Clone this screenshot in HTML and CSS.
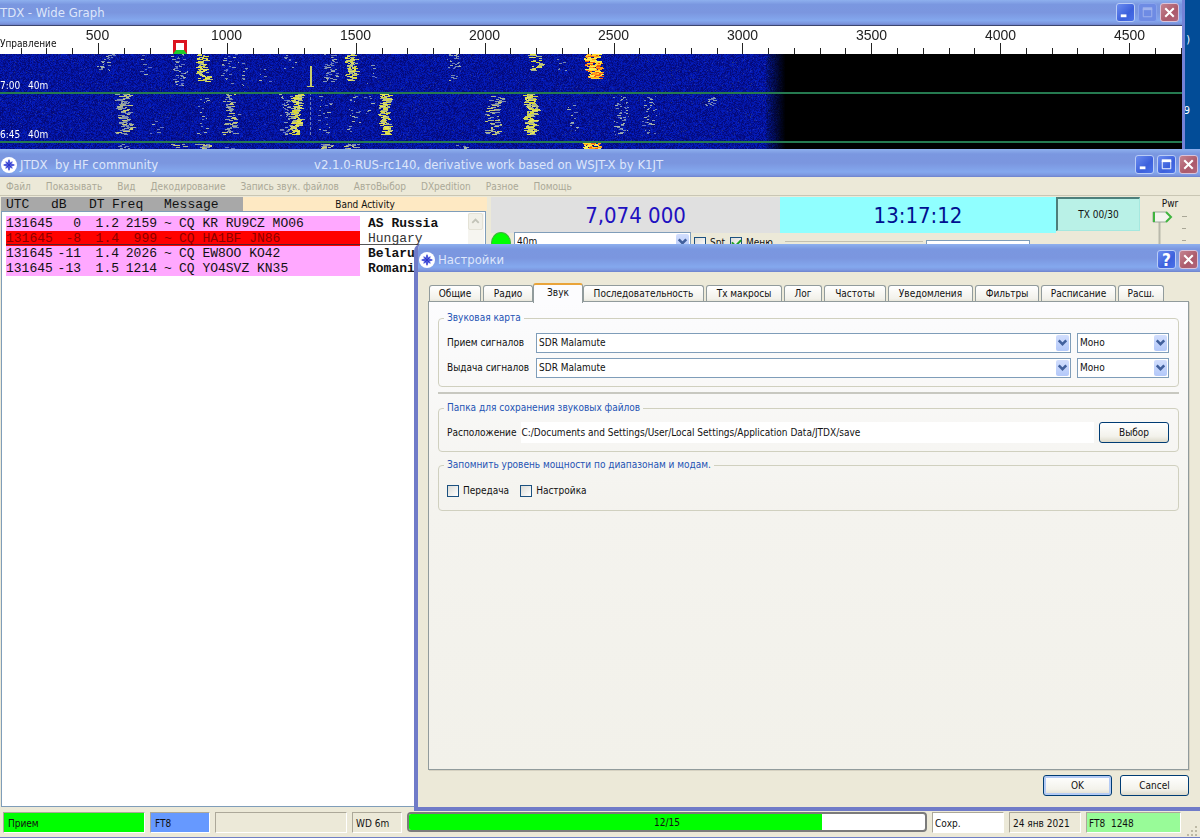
FILE: index.html
```html
<!DOCTYPE html>
<html lang="ru">
<head>
<meta charset="utf-8">
<title>JTDX</title>
<link rel="stylesheet" href="styles.css">
</head>
<body>
<svg class="defs" aria-hidden="true">
  <symbol id="logo" viewBox="0 0 16 16"><circle cx="8" cy="8" r="8" fill="#fff"/><path d="M8 1.500l1.200 3.400 2.600-.700-.700 2.600L14.500 8l-3.400 1.200.700 2.600-2.600-.700L8 14.500l-1.200-3.400-2.600.700.700-2.600L1.500 8l3.400-1.200-.700-2.600 2.600.700z" fill="#6d78e4"/><path d="M8 3v10M3 8h10M5.500 5.500l5 5M10.500 5.500l-5 5" stroke="#2c34cc" stroke-width="1"/></symbol>
  <symbol id="min" viewBox="0 0 18 18"><path d="M4 12.500h6" stroke="#fff" stroke-width="3"/></symbol>
  <symbol id="max" viewBox="0 0 18 18"><path d="M4.500 5v8.500h9V5" fill="none" stroke="#fff"/><path d="M4 5h10" stroke="#fff" stroke-width="3"/></symbol>
  <symbol id="close" viewBox="0 0 18 18"><path d="M4.500 4.500l9 9M13.500 4.500l-9 9" stroke="#fff" stroke-width="2.200"/></symbol>
  <symbol id="chev" viewBox="0 0 12 14"><path d="M2.500 5L6 8.500 9.500 5" fill="none" stroke="#41609c" stroke-width="2.400"/></symbol>
</svg>
<main class="desktop">
  <span class="desk-text desk-a">)</span>
  <span class="desk-text desk-b">9</span>

  <section class="window graph" aria-label="Wide Graph">
    <header class="titlebar">
      <h2 class="title">TDX - Wide Graph</h2>
      <div class="winbtns">
        <button class="wb" aria-label="Свернуть"><svg><use href="#min"/></svg></button>
        <button class="wb dim" aria-label="Развернуть"><svg><use href="#max"/></svg></button>
        <button class="wb red" aria-label="Закрыть"><svg><use href="#close"/></svg></button>
      </div>
    </header>
    <div class="ruler">
      <canvas id="ticks"></canvas>
      <div class="freqs"><span>500</span><span>1000</span><span>1500</span><span>2000</span><span>2500</span><span>3000</span><span>3500</span><span>4000</span><span>4500</span></div>
      <span class="control">Управление</span>
      <span class="marker"></span>
    </div>
    <div class="fall">
      <canvas id="fall"></canvas>
      <div class="stamp s1"><span>7:00</span><span>40m</span></div>
      <div class="stamp s2"><span>6:45</span><span>40m</span></div>
    </div>
  </section>

  <section class="window app" aria-label="JTDX">
    <header class="titlebar">
      <svg class="logo"><use href="#logo"/></svg>
      <h1 class="title name">JTDX&nbsp; by HF community</h1>
      <span class="title grow">v2.1.0-RUS-rc140, derivative work based on WSJT-X by K1JT</span>
      <div class="winbtns">
        <button class="wb" aria-label="Свернуть"><svg><use href="#min"/></svg></button>
        <button class="wb" aria-label="Развернуть"><svg><use href="#max"/></svg></button>
        <button class="wb red" aria-label="Закрыть"><svg><use href="#close"/></svg></button>
      </div>
    </header>
    <nav class="menu"><span>Файл</span><span>Показывать</span><span>Вид</span><span>Декодирование</span><span>Запись звук. файлов</span><span>АвтоВыбор</span><span>DXpedition</span><span>Разное</span><span>Помощь</span></nav>
    <div class="work">
      <div class="left">
        <div class="bandhead">
          <div class="cols"><span class="h-utc">UTC</span><span class="h-db">dB</span><span class="h-dt">DT</span><span class="h-freq">Freq</span><span>Message</span></div>
          <div class="band">Band Activity</div>
        </div>
        <div class="list">
          <table class="decodes">
            <colgroup><col class="c-utc"><col class="c-db"><col class="c-num"><col class="c-num"><col class="c-sign"><col class="c-msg"><col class="c-land"></colgroup>
            <tbody>
            <tr><td>131645</td><td>0</td><td>1.2</td><td>2159</td><td>~</td><td>CQ KR RU9CZ MO06</td><td>AS Russia</td></tr>
            <tr class="alert"><td>131645</td><td>-8</td><td>1.4</td><td>999</td><td>~</td><td>CQ HA1BF JN86</td><td>Hungary</td></tr>
            <tr><td>131645</td><td>-11</td><td>1.4</td><td>2026</td><td>~</td><td>CQ EW8OO KO42</td><td>Belarus</td></tr>
            <tr><td>131645</td><td>-13</td><td>1.5</td><td>1214</td><td>~</td><td>CQ YO4SVZ KN35</td><td>Romania</td></tr>
            </tbody>
          </table>
          <div class="scroll"><button class="up" aria-label="Вверх"><svg viewBox="0 0 14 16"><path d="M3.500 9.500L7 6l3.500 3.500" fill="none" stroke="#c2c3b8" stroke-width="2"/></svg></button></div>
        </div>
      </div>
      <div class="right">
        <div class="readouts">
          <div class="dial">7,074 000</div>
          <div class="clock">13:17:12</div>
          <button class="tx">TX 00/30</button>
        </div>
        <div class="controls">
          <span class="led"></span>
          <span class="combo bandsel"><select aria-label="Диапазон"><option>40m</option></select><span class="arrow"><svg><use href="#chev"/></svg></span></span>
          <label class="check"><input type="checkbox">Spt</label>
          <label class="check"><input type="checkbox" checked>Меню</label>
          <span class="edge"></span>
          <input class="call" aria-label="DX Call">
        </div>
        <label class="pwr">Pwr
          <svg viewBox="0 0 60 40"><path d="M19.500 13v27" stroke="#b9b9ab" stroke-width="2"/><path d="M42 7.500h5M42 19.500h4M42 31.500h4" stroke="#a9a797"/><path d="M13 3h13l5 5-5 5H13z" fill="#f4f4ee" stroke="#9aa89a"/><path d="M14 3v10M26 3l5 5-5 5" fill="none" stroke="#3fb53f" stroke-width="2"/></svg>
        </label>
      </div>
    </div>
    <footer class="status">
      <span class="cell rx">Прием</span>
      <span class="cell mode">FT8</span>
      <span class="cell blank"></span>
      <span class="cell wd">WD 6m</span>
      <div class="progress" role="progressbar" aria-valuemin="0" aria-valuemax="15" aria-valuenow="12"><span class="fill" style="width:80%"></span><span class="count">12/15</span></div>
      <span class="cell save">Сохр.</span>
      <span class="cell date">24 янв 2021</span>
      <span class="cell info">FT8&nbsp; 1248</span>
      <svg class="grip" viewBox="0 0 12 12"><path d="M9 1h2v2H9zM5 5h2v2H5zM9 5h2v2H9zM1 9h2v2H1zM5 9h2v2H5zM9 9h2v2H9z" fill="#bdb9a5"/></svg>
    </footer>
  </section>

  <section class="window dialog" role="dialog" aria-label="Настройки">
    <header class="titlebar">
      <svg class="logo"><use href="#logo"/></svg>
      <h2 class="title">Настройки</h2>
      <div class="winbtns">
        <button class="wb help" aria-label="Справка">?</button>
        <button class="wb red" aria-label="Закрыть"><svg><use href="#close"/></svg></button>
      </div>
    </header>
    <div class="body">
      <div class="tabs" role="tablist">
        <button role="tab">Общие</button><button role="tab">Радио</button><button role="tab" aria-selected="true" class="active">Звук</button><button role="tab">Последовательность</button><button role="tab">Tx макросы</button><button role="tab">Лог</button><button role="tab">Частоты</button><button role="tab">Уведомления</button><button role="tab">Фильтры</button><button role="tab">Расписание</button><button role="tab">Расш.</button>
      </div>
      <div class="panel" role="tabpanel">
        <fieldset class="card">
          <legend>Звуковая карта</legend>
          <label for="in">Прием сигналов</label>
          <span class="combo"><select id="in"><option>SDR Malamute</option></select><span class="arrow"><svg><use href="#chev"/></svg></span></span>
          <span class="combo"><select aria-label="Канал приема"><option>Моно</option></select><span class="arrow"><svg><use href="#chev"/></svg></span></span>
          <label for="out">Выдача сигналов</label>
          <span class="combo"><select id="out"><option>SDR Malamute</option></select><span class="arrow"><svg><use href="#chev"/></svg></span></span>
          <span class="combo"><select aria-label="Канал выдачи"><option>Моно</option></select><span class="arrow"><svg><use href="#chev"/></svg></span></span>
        </fieldset>
        <hr>
        <fieldset class="folder">
          <legend>Папка для сохранения звуковых файлов</legend>
          <label for="path">Расположение</label>
          <input id="path" class="path" value="C:/Documents and Settings/User/Local Settings/Application Data/JTDX/save" readonly>
          <button class="btn">Выбор</button>
        </fieldset>
        <fieldset class="power">
          <legend>Запомнить уровень мощности по диапазонам и модам.</legend>
          <label class="check"><input type="checkbox">Передача</label>
          <label class="check"><input type="checkbox">Настройка</label>
        </fieldset>
      </div>
      <div class="actions"><button class="btn primary">OK</button><button class="btn">Cancel</button></div>
    </div>
  </section>
</main>
<script src="graph.js"></script>
</body>
</html>
```
FILE: styles.css
```css
* { box-sizing: border-box; }
body { margin: 0; font: 11px/14px "DejaVu Sans Condensed", "DejaVu Sans", sans-serif; color: #111; }
button, input, select { font: inherit; color: inherit; margin: 0; padding: 0; }
.defs { position: absolute; width: 0; height: 0; }
.desktop { position: relative; height: 100vh; overflow: hidden; background: #024c97; }
.desk-text { position: absolute; right: 10px; color: #fff; }
.desk-a { top: 33px; }
.desk-b { top: 104px; }

.window { position: absolute; display: flex; flex-direction: column; background: #ece9d8; }
.graph { left: 0; right: 15px; top: 0; height: 150px; border-right: 3px solid #7482d6; }
.app { left: 0; right: 0; top: 149px; bottom: 0; border-bottom: 1px solid #6f7fc4; }
.dialog { left: 414px; right: 0; top: 244px; bottom: 27px; border: solid #707bc8; border-width: 0 0 4px 4px; border-radius: 7px 0 0 0; overflow: hidden; }

.titlebar { display: flex; align-items: center; flex: none; height: 28px; padding: 3px 2px 0 1px; gap: 3px; background: linear-gradient(#8eb0ee 0, #7a97e0 18%, #7b96df 50%, #84a8ee 82%, #7d98e0 93%, #6d82cc 100%); }
.graph .titlebar { height: 26px; padding: 0 3px 0 0; border-bottom: 1px solid #3c466e; }
.title { margin: 0; font: 13px/16px "DejaVu Sans Condensed", "DejaVu Sans", sans-serif; color: #dde6fb; white-space: nowrap; }
.name { width: 291px; }
.logo { width: 16px; height: 16px; flex: none; }
.winbtns { display: flex; gap: 3px; margin-left: auto; }
.wb { display: flex; align-items: center; justify-content: center; width: 19px; height: 19px; border: 1px solid #b9ccf6; border-radius: 3px; background: linear-gradient(135deg, #6b8df0, #3c60dc 60%, #4a72ea); color: #fff; }
.wb svg { width: 17px; height: 17px; }
.wb.dim { background: #6e8be4; border-color: #87a3ec; }
.wb.dim svg { opacity: .35; }
.wb.red { background: linear-gradient(135deg, #c48390, #ac5a6b 60%, #b0667c); border-color: #d9c3da; }
.help { font-size: 17px; font-weight: bold; }

.ruler { position: relative; flex: none; height: 28px; background: #fff; overflow: hidden; }
.ruler canvas { display: block; width: 100%; height: 28px; }
.freqs { position: absolute; left: 33px; top: 1px; display: flex; font: 14px/17px "Liberation Sans", Arial, sans-serif; color: #222; }
.freqs span { width: 129px; text-align: center; }
.control { position: absolute; left: 0; top: 11px; font-size: 10px; }
.marker { position: absolute; left: 173px; top: 14px; width: 14px; height: 14px; border: 3px solid #dc1420; border-bottom: 4px solid #1ecc2c; background: #fff; }
.fall { position: relative; flex: 1; min-height: 0; overflow: hidden; background: #000; }
.fall canvas { display: block; width: 100%; height: 100%; }
.stamp { position: absolute; left: 0; display: flex; font-size: 10px; color: #fff; }
.stamp span:first-child { width: 28px; }
.s1 { top: 25px; }
.s2 { top: 74px; }

.menu { display: flex; flex: none; gap: 15px; height: 19px; padding: 3px 6px 0; color: #aaa897; border-bottom: 1px solid #c9c6b4; font-size: 10px; white-space: nowrap; }
.work { display: flex; flex: 1; min-height: 0; }
.left { display: flex; flex-direction: column; width: 487px; padding-left: 1px; }
.bandhead { display: flex; height: 14px; margin-top: 1px; }
.cols { display: flex; width: 242px; padding-left: 5px; background: #a8a8a8; font: 13px/15px "Liberation Mono", monospace; }
.h-utc { width: 45px; }
.h-db { width: 38px; }
.h-dt { width: 23px; }
.h-freq { width: 52px; }
.band { flex: 1; background: #fee9c3; text-align: center; font-size: 10px; line-height: 15px; }
.list { display: flex; flex: 1; align-items: flex-start; margin-right: 1px; padding: 4px 1px 0 4px; background: #fff; border: 1px solid #7f9db9; overflow: hidden; }
.decodes { flex: 1; border-collapse: collapse; table-layout: fixed; width: 463px; font: 13px/15px "Liberation Mono", monospace; white-space: nowrap; }
.decodes td { padding: 0; height: 15px; text-align: right; background: #ffa8ff; }
.decodes td:nth-child(1), .decodes td:nth-child(6) { text-align: left; }
.decodes td:nth-child(5) { text-align: center; }
.decodes td:last-child { background: #fff; text-align: left; padding-left: 8px; font-weight: bold; }
.decodes .alert td { background: linear-gradient(#f00 13px, #58202c 13px, #58202c 14px, #f00 14px); color: #8a0000; }
.decodes .alert td:last-child { background: linear-gradient(#fff 13px, #555 13px, #555 14px, #fff 14px); color: #333; font-weight: normal; }
.c-utc { width: 45px; }
.c-db { width: 30px; }
.c-num { width: 38px; }
.c-sign { width: 22px; }
.c-msg { width: 181px; }
.scroll { width: 16px; align-self: stretch; background: #f6f5f0; margin-top: -3px; }
.up { display: block; width: 15px; height: 17px; border: 1px solid #e4e2d6; border-radius: 2px; background: #f1f0e8; }

.right { display: grid; flex: 1; grid-template-columns: 1fr 60px; grid-template-rows: 36px auto; align-content: start; padding-left: 4px; }
.readouts { display: grid; grid-template-columns: 289fr 276fr 84fr; padding-top: 1px; }
.dial, .clock { display: flex; align-items: center; justify-content: center; font-size: 22px; line-height: 34px; padding-top: 2px; }
.dial { background: #e0e0e0; color: #2010c0; }
.clock { background: #90ffff; color: #001090; }
.tx { align-self: stretch; height: 34px; border: solid #4d7f7b; border-width: 2px 1px 1px 2px; border-right-color: #a5e8df; border-bottom-color: #a5e8df; background: #b9f1e7; font-size: 10px; }
.controls { display: flex; gap: 3px; }
.led { width: 20px; height: 22px; border-radius: 50%; background: #0f0; border: 1px solid #3eb33e; }
.bandsel { width: 177px; }
.bandsel select { padding-left: 5px; padding-top: 1px; }
.edge { width: 138px; height: 12px; margin: 9px 0 0 7px; border-top: 1px solid #c3c0b0; }
.call { width: 104px; height: 18px; margin-top: 8px; border: 1px solid #7f9db9; }
.controls .check { align-self: flex-start; margin-top: 4px; margin-right: 2px; gap: 4px; font-size: 10px; }
.pwr { grid-column: 2; grid-row: 1 / 3; display: flex; flex-direction: column; align-items: center; font-size: 10px; padding-top: 1px; }
.pwr svg { width: 60px; height: 40px; margin-top: -2px; }

.combo { position: relative; display: block; height: 20px; }
.combo select { width: 100%; height: 100%; appearance: none; border: 1px solid #7f9db9; border-radius: 0; background: #fff; padding: 0 20px 0 2px; font-size: 10px; }
.arrow { position: absolute; right: 2px; top: 2px; width: 13px; height: 16px; border-radius: 2px; background: linear-gradient(#d2defd, #b3c8f9); pointer-events: none; }
.arrow svg { display: block; width: 13px; height: 15px; }
.check { display: flex; align-items: center; gap: 4px; }
.check input { appearance: none; width: 12px; height: 12px; border: 1px solid #1c5180; background: linear-gradient(135deg, #dcdcd7, #fff); }
.check input:checked::after { content: ""; display: block; width: 7px; height: 4px; margin: 1px; border: solid #21a121; border-width: 0 0 2px 2px; transform: rotate(-45deg); }

.status { display: flex; align-items: center; gap: 5px; flex: none; height: 30px; padding: 0 8px 0 3px; font-size: 10px; }
.cell { height: 21px; padding: 1px 4px; line-height: 20px; border: 1px solid; border-color: #aca899 #fff #fff #aca899; white-space: nowrap; }
.rx { width: 142px; background: #0f0; }
.mode { width: 60px; background: #69f; }
.blank { width: 132px; }
.wd { width: 50px; padding: 1px 3px; }
.progress { position: relative; flex: 1; height: 20px; background: #fff; border: 2px solid #7b7b7b; border-radius: 4px; overflow: hidden; }
.fill { display: block; height: 100%; background: #0f0; }
.count { position: absolute; inset: 0; text-align: center; line-height: 17px; }
.save { width: 72px; background: #fff; padding: 1px 2px; }
.date { width: 72px; padding: 1px 3px; }
.info { width: 95px; background: #98fb98; padding: 1px 2px; }
.grip { width: 12px; height: 12px; align-self: flex-end; margin-right: -6px; }

.body { display: flex; flex: 1; flex-direction: column; padding: 11px 11px 0 10px; font-size: 10px; }
.tabs { display: grid; grid-template-columns: 54px 52px 48px 123px 78px 40px 64px 87px 66px 77px 48px; align-items: end; height: 18px; padding-left: 1px; }
.tabs button { height: 17px; margin-right: 2px; border: 1px solid #919b9c; border-bottom: 0; border-radius: 3px 3px 0 0; background: linear-gradient(#fff, #f2f1ea 80%, #e3e1d4); white-space: nowrap; }
.tabs .active { position: relative; height: 20px; margin: 0 0 -1px -2px; border-top: 2px solid #e9a43a; background: #fcfcfe; padding-bottom: 2px; }
.panel { flex: 1; padding: 9px; border: 1px solid #919b9c; box-shadow: 1px 1px #d6d2c2; background: linear-gradient(#fcfcfe, #f4f3ee 45%, #f2f1ea); }
fieldset { display: grid; align-items: center; margin: 0; min-width: 0; border: 1px solid #d0d0bf; border-radius: 4px; }
legend { margin-left: -3px; padding: 0 3px; color: #2453b4; }
.card { grid-template-columns: 83px 1fr 92px; gap: 5px 6px; padding: 8px 9px 8px 8px; }
hr { height: 2px; margin: 5px 0 7px; border: 0; background: #c8c8c0; }
.folder { grid-template-columns: auto 1fr 70px; gap: 5px; padding: 7px 9px 8px 8px; margin-bottom: 6px; }
.path { width: 100%; height: 21px; border: 0; background: #fff; }
.power { display: flex; gap: 11px; padding: 12px 8px; }
.btn { height: 21px; border: 1px solid #003c74; border-radius: 3px; background: linear-gradient(#fff, #f3f2eb 70%, #dddacb); }
.primary { box-shadow: inset 0 0 0 2px #b4cbf5; }
.actions { display: flex; justify-content: flex-end; gap: 8px; padding: 5px 0 11px; }
.actions .btn { width: 69px; }
```
FILE: graph.js
```js
const ticks = document.getElementById('ticks');
const fall = document.getElementById('fall');
let seed = 7;
const rnd = () => { seed = (seed * 1664525 + 1013904223) >>> 0; return seed / 4294967296; };

function drawTicks() {
  const w = ticks.width = ticks.clientWidth, h = ticks.height = ticks.clientHeight;
  const c = ticks.getContext('2d');
  c.fillStyle = '#222';
  for (let f = 200; ; f += 100) {
    const x = Math.round(98 + (f - 500) * 0.25775);
    if (x > w) break;
    const t = f % 500 === 0 ? 11 : 6;
    c.fillRect(x, h - t, 1, t);
  }
}

// x, top, bottom, width, strength, palette
const signals = [
  [107, 0, 17, 12, .5, 0], [147, 0, 24, 12, .2, 0], [180, 0, 32, 12, .45, 0], [203, 0, 28, 9, .7, 1],
  [229, 0, 30, 14, .25, 0], [241, 8, 32, 12, .18, 0], [264, 15, 30, 10, .1, 0], [290, 0, 15, 10, .2, 0],
  [330, 0, 28, 11, .55, 0], [352, 0, 28, 9, .7, 1], [375, 10, 30, 10, .12, 0],
  [455, 0, 15, 11, .5, 0], [453, 18, 28, 10, .3, 0], [535, 0, 17, 9, .55, 1], [561, 5, 18, 10, .25, 0], [594, 0, 25, 13, 1, 2],
  [125, 40, 81, 11, .75, 3], [156, 65, 80, 10, .15, 0], [204, 42, 81, 11, .25, 0], [232, 40, 81, 11, .55, 3],
  [287, 40, 81, 11, .4, 0], [298, 40, 81, 9, .95, 1], [325, 42, 80, 11, .25, 0], [354, 42, 81, 11, .2, 0],
  [369, 42, 60, 11, .3, 0], [386, 40, 81, 9, .95, 1], [494, 42, 81, 14, .65, 3], [532, 40, 81, 10, 1.1, 1],
  [574, 42, 78, 10, .1, 0], [621, 42, 81, 13, .5, 0], [649, 42, 81, 12, .35, 0], [713, 42, 53, 11, .45, 0],
  [123, 90, 95, 12, .4, 0], [180, 90, 95, 12, .6, 3], [203, 90, 95, 12, .7, 3], [229, 90, 95, 12, .3, 0],
  [328, 90, 95, 12, .7, 3], [352, 90, 95, 12, .7, 3], [460, 90, 95, 14, .6, 0], [592, 89, 95, 15, 1, 2]
];
const palettes = [
  ['#8397b5', '#6272c0', '#a6b3a7', '#7385af'],
  ['#e4e35c', '#c8ce72', '#a9b58a', '#d9d83a'],
  ['#ffd32f', '#ff9e16', '#f7ef50', '#f15a12'],
  ['#c9ca74', '#8f9fa6', '#a9b290', '#7d8cae']
];

function drawFall() {
  const w = fall.width = fall.clientWidth, h = fall.height = fall.clientHeight;
  const c = fall.getContext('2d');
  const img = c.createImageData(w, h);
  for (let y = 0; y < h; y++) for (let x = 0; x < w; x++) {
    const i = (y * w + x) * 4;
    const fade = x < 765 ? 1 : Math.max(0, 1 - (x - 765) / 20);
    const n = rnd(), s = rnd();
    img.data[i] = (s > .985 ? 35 : 4) * fade;
    img.data[i + 1] = (s > .985 ? 50 : 8 + n * 22) * fade;
    img.data[i + 2] = (115 + n * 80) * (fade < 1 ? fade * (.7 + rnd() * .3) : 1);
    img.data[i + 3] = 255;
  }
  c.putImageData(img, 0, 0);
  for (const [x, t, b, width, k, p] of signals) {
    let drift = 0;
    for (let y = t; y < b; y++) {
      drift = drift * .7 + (rnd() - .5) * 4;
      const count = k * (p === 2 ? 7 : 3);
      for (let n = 0; n < count; n++) {
        if (rnd() > k + .2) continue;
        const len = p === 0 ? 1 + rnd() * 3 : 2 + rnd() * 4;
        c.fillStyle = palettes[p][Math.floor(rnd() * 4)];
        c.fillRect(Math.round(x + drift + (rnd() - .5) * width - len / 2), y, Math.round(len), 1);
      }
    }
  }
  c.fillStyle = '#c9ce6a';
  c.fillRect(310, 12, 2, 20);
  c.fillRect(307, 32, 7, 1);
  c.fillStyle = '#6f82b8';
  for (let y = 38; y < 80; y += 5) c.fillRect(310, y, 1, 3);
  c.fillStyle = '#257a50';
  c.fillRect(0, 38, w, 2);
  c.fillRect(0, 87, w, 2);
}
function draw() { seed = 7; drawTicks(); drawFall(); }
draw();
window.addEventListener('resize', draw);
```
